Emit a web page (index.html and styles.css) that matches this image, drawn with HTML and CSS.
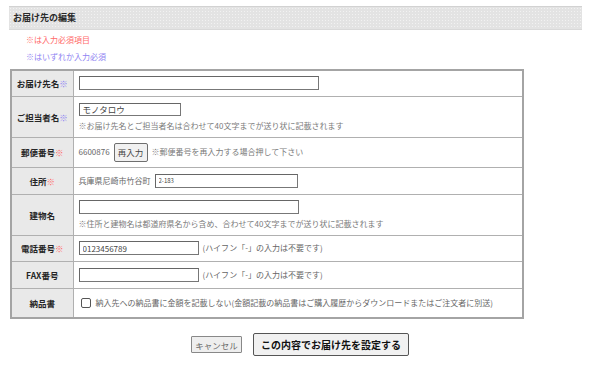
FILE: index.html
```html
<!DOCTYPE html>
<html lang="ja">
<head>
<meta charset="utf-8">
<title>お届け先の編集</title>
<link rel="stylesheet" href="styles.css">
</head>
<body>
<div class="page">
  <h2 class="title">お届け先の編集</h2>
  <p class="note note-req">※は入力必須項目</p>
  <p class="note note-any">※はいずれか入力必須</p>
  <table class="form">
    <colgroup><col class="c-label"><col class="c-field"></colgroup>
    <tr class="r1">
      <th>お届け先名<span class="any">※</span></th>
      <td><input class="in in-name" type="text"></td>
    </tr>
    <tr class="r2">
      <th>ご担当者名<span class="any">※</span></th>
      <td>
        <input class="in in-person" type="text" value="モノタロウ">
        <div class="hint">※お届け先名とご担当者名は合わせて40文字までが送り状に記載されます</div>
      </td>
    </tr>
    <tr class="r3">
      <th>郵便番号<span class="req">※</span></th>
      <td><div class="line"><span class="val">6600876</span><button class="btn-small" type="button">再入力</button><span class="hint">※郵便番号を再入力する場合押して下さい</span></div></td>
    </tr>
    <tr class="r4">
      <th>住所<span class="req">※</span></th>
      <td><div class="line"><span class="val">兵庫県尼崎市竹谷町</span><input class="in in-addr" type="text" value="2-183"></div></td>
    </tr>
    <tr class="r5">
      <th>建物名</th>
      <td>
        <input class="in in-bldg" type="text">
        <div class="hint">※住所と建物名は都道府県名から含め、合わせて40文字までが送り状に記載されます</div>
      </td>
    </tr>
    <tr class="r6">
      <th>電話番号<span class="req">※</span></th>
      <td><div class="line"><input class="in in-tel" type="text" value="0123456789"><span class="val">(ハイフン「-」の入力は不要です)</span></div></td>
    </tr>
    <tr class="r7">
      <th>FAX番号</th>
      <td><div class="line"><input class="in in-tel" type="text"><span class="val">(ハイフン「-」の入力は不要です)</span></div></td>
    </tr>
    <tr class="r8">
      <th>納品書</th>
      <td><label class="line check"><input class="cb" type="checkbox"><span class="val">納入先への納品書に金額を記載しない(金額記載の納品書はご購入履歴からダウンロードまたはご注文者に別送)</span></label></td>
    </tr>
  </table>
  <div class="actions">
    <button class="btn-cancel" type="button">キャンセル</button>
    <button class="btn-submit" type="button">この内容でお届け先を設定する</button>
  </div>
</div>
</body>
</html>
```

FILE: styles.css
```css
* { box-sizing: border-box; }
html, body { margin: 0; padding: 0; background: #fff; }
body {
  font-family: "Noto Sans CJK JP", "Noto Sans", sans-serif;
  color: #333;
}
.page { width: 590px; height: 370px; overflow: hidden; padding-top: 6px; }

.title {
  margin: 0 0 0 9px;
  width: 573px;
  height: 24px;
  padding-left: 4px;
  font-size: 9px;
  line-height: 22px;
  font-weight: bold;
  color: #2a2a2a;
  background-color: #e3e3e3;
  background-image: radial-gradient(#f2f2f2 0.6px, transparent 0.7px);
  background-size: 3px 3px;
  border-top: 1px solid #d2d2d2;
  border-bottom: 1px solid #d9d9d9;
}

.note {
  margin: 0;
  padding-left: 26px;
  font-size: 8px;
  line-height: 12px;
}
.note-req { margin-top: 4px; color: #ff6a6a; }
.note-any { margin-top: 5px; color: #8f84f2; }

.req { color: #ff6a6a; font-weight: normal; }
.any { color: #8f84f2; font-weight: normal; }

.form {
  margin: 6px 0 0 10px;
  width: 514px;
  border-collapse: collapse;
  table-layout: fixed;
  border: 2px solid #a4a4a4;
}
.c-label { width: 62px; }
.form th, .form td {
  border: 1px solid #b0b0b0;
  padding: 0 0 0 5px;
  vertical-align: middle;
}
.form th {
  padding: 0;
  text-align: center;
  font-size: 8.5px;
  font-weight: bold;
  color: #262626;
  background-color: #e9e9e9;
  background-image: radial-gradient(#f7f7f7 0.6px, transparent 0.7px);
  background-size: 4px 4px;
  white-space: nowrap;
}
.form td { font-size: 8px; color: #666; }

.r1 { height: 26px; }
.r2 { height: 41px; }
.r3 { height: 30px; }
.r4 { height: 27px; }
.r5 { height: 41px; }
.r6 { height: 26px; }
.r7 { height: 27px; }
.r8 { height: 30px; }

.in {
  display: block;
  height: 14px;
  margin: 0;
  padding: 0 3px;
  border: 1px solid #777;
  border-top-color: #666;
  border-left-color: #666;
  border-radius: 0;
  background: #fff;
  font-family: inherit;
  font-size: 8px;
  line-height: 12px;
  color: #444;
  outline: none;
}
.in-name { width: 240px; }
.in-person { width: 102px; height: 13px; font-size: 8.5px; }
.in-addr { width: 143px; font-size: 6px; margin-left: 4px; }
.in-bldg { width: 220px; }
.in-tel { width: 120px; }

.hint {
  font-size: 8px;
  line-height: 10px;
  color: #7a7a7a;
  white-space: nowrap;
}
.r2 .hint, .r5 .hint { margin-top: 5px; }

.line {
  display: flex;
  align-items: center;
  white-space: nowrap;
}
.val { font-size: 8px; line-height: 10px; color: #666; }
.r6 .val, .r7 .val { margin-left: 4px; }

.btn-small {
  margin: 0 4px 0 4px;
  width: 34px;
  height: 19px;
  padding: 0;
  border: 1px solid #6f6f6f;
  border-radius: 2px;
  background: #f1f1f1;
  font-family: inherit;
  font-size: 8.5px;
  color: #444;
}

.check { padding-left: 2px; }
.cb {
  appearance: none;
  -webkit-appearance: none;
  margin: 0 5px 0 0;
  width: 10px;
  height: 10px;
  border: 1px solid #555;
  border-radius: 2px;
  background: #fff;
}

.actions {
  display: flex;
  align-items: center;
  gap: 11px;
  padding-left: 191px;
  margin-top: 14px;
}
.btn-cancel {
  width: 51px;
  height: 17px;
  padding: 0;
  border: 1px solid #888;
  border-radius: 1px;
  background: #eeeeee;
  font-family: inherit;
  font-size: 8.5px;
  color: #6a6a6a;
}
.btn-submit {
  width: 156px;
  height: 23px;
  padding: 0;
  border: 1px solid #555;
  border-radius: 2px;
  background: #f1f1f1;
  font-family: inherit;
  font-size: 10px;
  font-weight: bold;
  color: #111;
}
```
